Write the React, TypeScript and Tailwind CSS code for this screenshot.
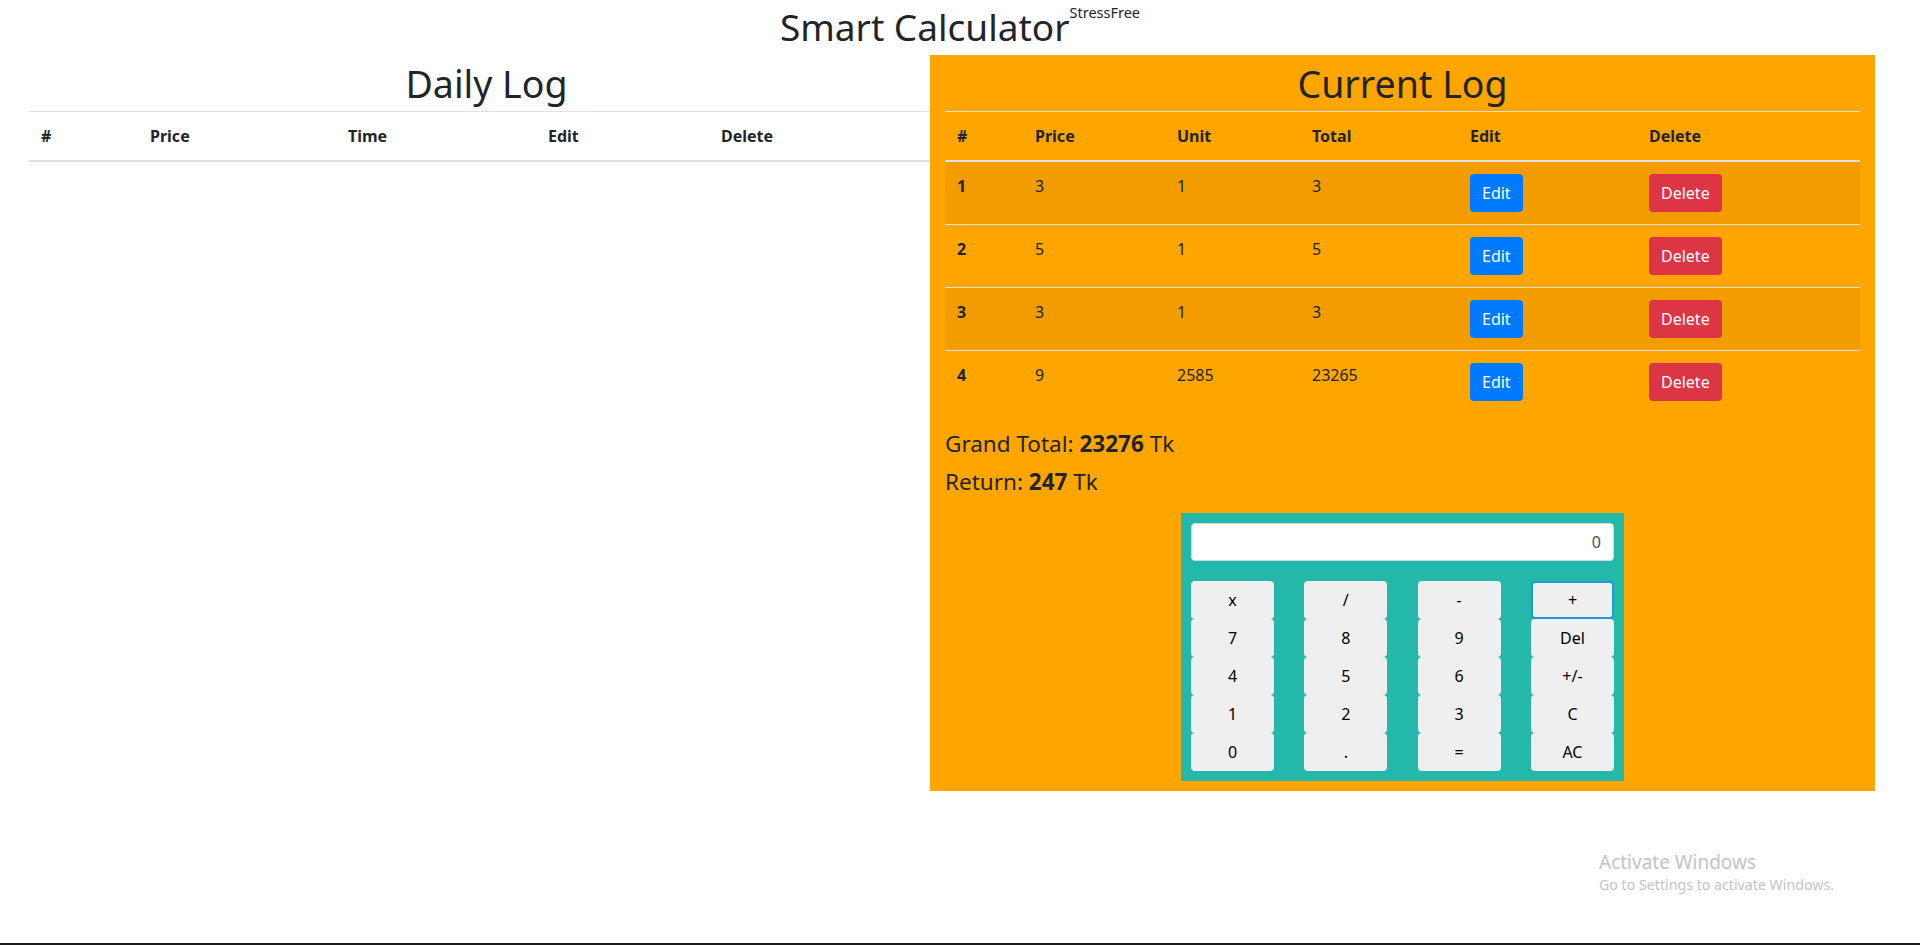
import React from "react";

const font = { fontFamily: '"Segoe UI", "Noto Sans", "Liberation Sans", sans-serif' };

const current = [
  { id: 1, price: "3", unit: "1", total: "3" },
  { id: 2, price: "5", unit: "1", total: "5" },
  { id: 3, price: "3", unit: "1", total: "3" },
  { id: 4, price: "9", unit: "2585", total: "23265" },
];

const keys = [
  "x", "/", "-", "+",
  "7", "8", "9", "Del",
  "4", "5", "6", "+/-",
  "1", "2", "3", "C",
  "0", ".", "=", "AC",
];

function DailyLog() {
  return (
    <div className="w-[901px] ml-[29px]">
      <h2 className="w-[915px] mt-[6px] mb-[5px] text-[37.5px] leading-[45px] text-center text-[#212529]">Daily Log</h2>
      <div className="grid grid-cols-[109px_198px_200px_173px_221px] border-t border-b-2 border-[#dee2e6] text-[16px] leading-6 font-bold text-[#212529]">
        {["#", "Price", "Time", "Edit", "Delete"].map((h) => (
          <div key={h} className="p-3">{h}</div>
        ))}
      </div>
    </div>
  );
}

function Calculator() {
  return (
    <div className="w-[443px] mx-auto bg-[#24b8aa] p-[10px]">
      <div className="h-[38px] bg-white rounded-[4px] border border-[#d4d8dc] text-right pr-3 text-[16px] leading-[36px] text-[#495057]">
        0
      </div>
      <div className="mt-5 grid grid-cols-[83px_83px_83px_83px] justify-between">
        {keys.map((k) => (
          <button
            key={k}
            className={
              "h-[38px] rounded-[4px] bg-[#efefef] text-[16px] text-black " +
              (k === "+" ? "border-2 border-[#1e9bd7]" : "")
            }
          >
            {k}
          </button>
        ))}
      </div>
    </div>
  );
}

function CurrentLog() {
  return (
    <div className="relative w-[945px] bg-[#ffa500] px-[15px] pt-[6px] pb-[10px] text-[#212529]">
      <h2 className="mb-[5px] text-[37.5px] leading-[45px] text-center">Current Log</h2>
      <div className="grid grid-cols-[78px_142px_135px_158px_179px_223px] border-t border-b-2 border-[#dee2e6] text-[16px] leading-6 font-bold">
        {["#", "Price", "Unit", "Total", "Edit", "Delete"].map((h) => (
          <div key={h} className="p-3">{h}</div>
        ))}
      </div>
      {current.map((r, i) => (
        <div
          key={r.id}
          className={
            "grid grid-cols-[78px_142px_135px_158px_179px_223px] text-[16px] leading-6 " +
            (i > 0 ? "border-t border-[#dee2e6] " : "") +
            (i % 2 === 0 ? "bg-black/5" : "")
          }
        >
          <div className="p-3 font-bold">{r.id}</div>
          <div className="p-3">{r.price}</div>
          <div className="p-3">{r.unit}</div>
          <div className="p-3">{r.total}</div>
          <div className="p-3">
            <button className="h-[38px] px-3 rounded-[4px] bg-[#007bff] text-white">Edit</button>
          </div>
          <div className="p-3">
            <button className="h-[38px] px-3 rounded-[4px] bg-[#dc3545] text-white">Delete</button>
          </div>
        </div>
      ))}
      <div className="mt-4 text-[22.5px] leading-[30px]">
        Grand Total: <b>23276</b> Tk
      </div>
      <div className="mt-2 text-[22.5px] leading-[30px]">
        Return: <b>247</b> Tk
      </div>
      <div className="mt-4">
        <Calculator />
      </div>
    </div>
  );
}

export default function App() {
  return (
    <div className="relative h-[945px] overflow-hidden bg-white" style={font}>
      <h1 className="h-[55px] pt-[3px] text-center text-[37px] leading-[48px] text-[#212529]">
        Smart Calculator
        <span className="inline-block align-top text-[14.5px] leading-4 relative top-[1px]">StressFree</span>
      </h1>
      <div className="flex items-start">
        <DailyLog />
        <CurrentLog />
      </div>
      <div className="absolute left-[1599px] top-[848px] text-[#c4c4c4]">
        <div className="text-[19px] leading-7">Activate Windows</div>
        <div className="text-[14.2px] leading-[17px]">Go to Settings to activate Windows.</div>
      </div>
      <div className="absolute left-0 right-0 bottom-0 h-[2px] bg-[#1c1c1c]" />
    </div>
  );
}
